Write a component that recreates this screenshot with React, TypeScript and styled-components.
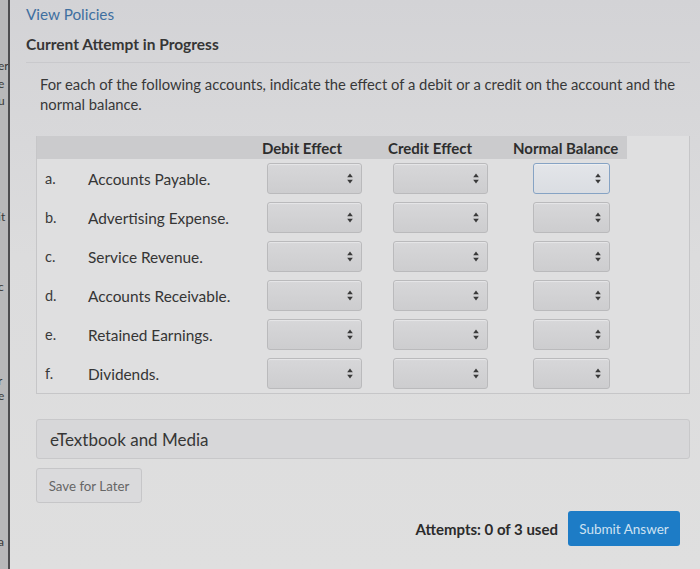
import React from "react";
import styled, { createGlobalStyle } from "styled-components";

const GlobalStyle = createGlobalStyle`
    html, body {
        margin: 0;
        padding: 0;
        background: #d9d9d9;
    }
    body {
        font-family: Lato, "Open Sans", "Liberation Sans", sans-serif;
        color: #333;
    }
`;

const Page = styled.div`
    display: flex;
    width: 700px;
    height: 569px;
    overflow: hidden;
    background: linear-gradient(180deg, #d3d3d6 0%, #dcdcdd 45%, #dfdfdf 100%);
`;

const BehindStrip = styled.div`
    width: 8px;
    flex-shrink: 0;
    display: flex;
    flex-direction: column;
    overflow: hidden;
    background: #b8b8b9;
    border-right: 2px solid #4d4d4f;
`;

const Scrap = styled.span<{ $gap: number }>`
    display: block;
    margin-top: ${p => p.$gap}px;
    margin-left: -2px;
    font-size: 12px;
    line-height: 13px;
    color: #3a3a3a;
    white-space: nowrap;
`;

const Main = styled.div`
    flex: 1;
    display: flex;
    flex-direction: column;
    padding: 5px 10px 0 16px;
`;

const TopBar = styled.div`
    display: flex;
    flex-direction: column;
    gap: 12px;
    padding-bottom: 9px;
    border-bottom: 1px solid #c9c9cc;
`;

const PolicyLink = styled.a`
    font-size: 15.3px;
    line-height: 18px;
    color: #3f6fa0;
    cursor: pointer;
`;

const AttemptTitle = styled.div`
    font-size: 15.5px;
    line-height: 18px;
    font-weight: 700;
    color: #363636;
`;

const Question = styled.div`
    display: flex;
    flex-direction: column;
    padding-top: 11px;
`;

const Prompt = styled.p`
    margin: 0 0 22px 14px;
    font-size: 14.8px;
    line-height: 20px;
    color: #383838;
`;

const TableBox = styled.div`
    margin-left: 10px;
    border: 1px solid #c6c6c8;
    border-top: none;
    background: #dfdfe0;
`;

const Grid = styled.div`
    display: grid;
    grid-template-columns: 43px 180px 126px 125px 116px 1fr;
    grid-auto-rows: 39px;
    grid-template-rows: 23px;
`;

const HeadCell = styled.div<{ $blank?: boolean }>`
    display: flex;
    align-items: center;
    padding-left: 2px;
    background: ${p => (p.$blank ? "transparent" : "#cbcbcd")};
    font-size: 15px;
    font-weight: 700;
    color: #2e2e2e;
    white-space: nowrap;
`;

const Letter = styled.div`
    display: flex;
    align-items: center;
    padding-left: 8px;
    font-size: 14.5px;
    color: #3a3a3a;
`;

const Label = styled.div`
    display: flex;
    align-items: center;
    padding-left: 8px;
    font-size: 15.4px;
    color: #353535;
    white-space: nowrap;
`;

const SelectCell = styled.div<{ $offset: number }>`
    display: flex;
    align-items: center;
    padding-left: ${p => p.$offset}px;
`;

const Select = styled.div<{ $width: number; $focus?: boolean }>`
    box-sizing: border-box;
    width: ${p => p.$width}px;
    height: 31px;
    display: flex;
    align-items: center;
    justify-content: flex-end;
    padding-right: 8px;
    border-radius: 3px;
    border: 1px solid ${p => (p.$focus ? "#86a3c4" : "#bababc")};
    background: ${p =>
        p.$focus
            ? "linear-gradient(180deg, #e3e5e9, #dadde2)"
            : "linear-gradient(180deg, #d7d7d9, #cdcdcf)"};
    box-shadow: inset 0 1px 1px rgba(255, 255, 255, 0.4);
`;

const MediaBar = styled.div`
    margin: 25px 0 0 10px;
    height: 38px;
    display: flex;
    align-items: center;
    padding-left: 13px;
    border: 1px solid #c8c8ca;
    border-radius: 3px;
    background: #d7d7d9;
    font-size: 17px;
    color: #363636;
`;

const SaveButton = styled.button`
    align-self: flex-start;
    margin: 9px 0 0 10px;
    width: 106px;
    height: 35px;
    border: 1px solid #c6c6c8;
    border-radius: 3px;
    background: #dadadc;
    font-family: inherit;
    font-size: 13.3px;
    color: #666;
    cursor: pointer;
`;

const Footer = styled.div`
    display: flex;
    align-items: center;
    justify-content: flex-end;
    gap: 10px;
    margin-top: 8px;
    padding-right: 10px;
`;

const Attempts = styled.span`
    font-size: 15px;
    font-weight: 700;
    color: #2b2b2b;
`;

const SubmitButton = styled.button`
    width: 112px;
    height: 35px;
    border: none;
    border-radius: 3px;
    background: #1d7cc6;
    font-family: inherit;
    font-size: 13.5px;
    color: #cfe2f2;
    cursor: pointer;
`;

const Updown = () => (
    <svg width="6" height="11" viewBox="0 0 6 11">
        <path d="M3 0.5 L5.8 4.3 H0.2 Z" fill="#3a3a3a" />
        <path d="M3 10.5 L5.8 6.7 H0.2 Z" fill="#3a3a3a" />
    </svg>
);

const scraps = [
    { t: "er", gap: 59 },
    { t: "e", gap: 5 },
    { t: "u", gap: 4 },
    { t: "it", gap: 103 },
    { t: "c", gap: 57 },
    { t: "r", gap: 81 },
    { t: "e", gap: 2 },
    { t: "a", gap: 133 },
];

const accounts = [
    { key: "a.", name: "Accounts Payable." },
    { key: "b.", name: "Advertising Expense." },
    { key: "c.", name: "Service Revenue." },
    { key: "d.", name: "Accounts Receivable." },
    { key: "e.", name: "Retained Earnings." },
    { key: "f.", name: "Dividends." },
];

export default function App() {
    return (
        <>
            <GlobalStyle />
            <Page>
                <BehindStrip>
                    {scraps.map((s, i) => (
                        <Scrap key={i} $gap={s.gap}>{s.t}</Scrap>
                    ))}
                </BehindStrip>
                <Main>
                    <TopBar>
                        <PolicyLink>View Policies</PolicyLink>
                        <AttemptTitle>Current Attempt in Progress</AttemptTitle>
                    </TopBar>
                    <Question>
                        <Prompt>
                            For each of the following accounts, indicate the effect of a debit or a credit on the account and the normal balance.
                        </Prompt>
                        <TableBox>
                            <Grid>
                                <HeadCell />
                                <HeadCell />
                                <HeadCell>Debit Effect</HeadCell>
                                <HeadCell>Credit Effect</HeadCell>
                                <HeadCell>Normal Balance</HeadCell>
                                <HeadCell $blank />
                                {accounts.map((a, i) => (
                                    <React.Fragment key={a.key}>
                                        <Letter>{a.key}</Letter>
                                        <Label>{a.name}</Label>
                                        <SelectCell $offset={7}>
                                            <Select $width={95}><Updown /></Select>
                                        </SelectCell>
                                        <SelectCell $offset={7}>
                                            <Select $width={95}><Updown /></Select>
                                        </SelectCell>
                                        <SelectCell $offset={22}>
                                            <Select $width={77} $focus={i === 0}><Updown /></Select>
                                        </SelectCell>
                                        <div />
                                    </React.Fragment>
                                ))}
                            </Grid>
                        </TableBox>
                        <MediaBar>eTextbook and Media</MediaBar>
                        <SaveButton>Save for Later</SaveButton>
                        <Footer>
                            <Attempts>Attempts: 0 of 3 used</Attempts>
                            <SubmitButton>Submit Answer</SubmitButton>
                        </Footer>
                    </Question>
                </Main>
            </Page>
        </>
    );
}
